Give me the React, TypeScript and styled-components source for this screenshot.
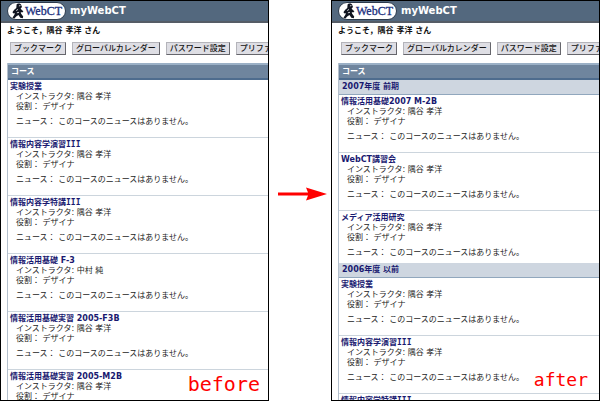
import React from "react";
import styled, { createGlobalStyle } from "styled-components";

const GlobalStyle = createGlobalStyle`
  *, *::before, *::after { box-sizing: border-box; }
  body {
    margin: 0;
    background: #fff;
    color: #1c1c1c;
    font-family: "DejaVu Sans", "Noto Sans CJK JP", sans-serif;
    font-size: 8px;
    line-height: 10px;
  }
`;

const Page = styled.main`
  display: grid;
  grid-template-columns: minmax(0, 1fr) 62px minmax(0, 1fr);
  height: 100vh;
  overflow: hidden;
`;

const Panel = styled.section`
  position: relative;
  overflow: hidden;
  border: 1px solid #000;
  background: #fff;
  white-space: nowrap;
`;

const Banner = styled.header`
  display: flex;
  align-items: center;
  gap: 4px;
  height: 22px;
  padding: 0 6px;
  background: #53687e;
  border-bottom: 2px solid #555c66;
`;

const Logo = styled.div`
  display: flex;
  align-items: center;
  gap: 1px;
  width: 59px;
  height: 18px;
  padding-left: 4px;
  border: 1px solid #2c3a4c;
  border-radius: 9px;
  background: #fff;
  color: #20307e;
  font-family: "Liberation Serif", serif;
  font-size: 12px;
  line-height: 16px;
  -webkit-text-stroke: 0.3px #20307e;
`;

const BannerTitle = styled.h1`
  margin: 0;
  color: #fff;
  font-size: 10px;
  line-height: 14px;
`;

const Welcome = styled.p`
  margin: 3px 0 0 6px;
  font-weight: 700;
  color: #111;
`;

const Toolbar = styled.nav`
  display: flex;
  gap: 6px;
  margin: 6px 0 8px 9px;
`;

const ToolButton = styled.button`
  flex: none;
  height: 13px;
  padding: 0 3px;
  border: 1px solid;
  border-color: #b4b4ba #66666c #66666c #b4b4ba;
  border-radius: 0;
  background: #dedee4;
  color: #151515;
  font: inherit;
  font-weight: 500;
  line-height: 10px;
`;

const CourseTable = styled.table`
  width: calc(100% - 6px);
  margin-left: 6px;
  border-collapse: separate;
  border-spacing: 0;
  border-left: 1px solid #b4c0cd;
`;

const HeadCell = styled.th`
  height: 17px;
  padding: 0 3px;
  border-top: 2px solid #9bb0c6;
  border-bottom: 2px solid #4e6c8e;
  background: #6f859e;
  color: #fff;
  text-align: left;
`;

const GroupCell = styled.th`
  height: 15px;
  padding: 0 3px;
  border-bottom: 1px solid #91a7bd;
  background: #ced6e0;
  color: #191970;
  text-align: left;
`;

const CourseCell = styled.td<{ $last: boolean }>`
  padding: 2px 2px ${(p) => (p.$last ? 5 : 10)}px;
  border-bottom: ${(p) => (p.$last ? "0" : "1px solid #ccd5dd")};
`;

const CourseLink = styled.a`
  display: block;
  color: #191970;
  font-weight: 700;
  text-decoration: none;
`;

const Numeral = styled.span`
  font-family: "DejaVu Sans Mono", monospace;
  line-height: 0;
`;

const Detail = styled.p`
  margin: 0 0 0 6px;
`;

const News = styled(Detail)`
  margin-top: 5px;
`;

const Caption = styled.strong<{ $small?: boolean }>`
  position: absolute;
  right: ${(p) => (p.$small ? 11 : 8)}px;
  bottom: ${(p) => (p.$small ? 10 : 6)}px;
  color: #f00;
  font-family: "DejaVu Sans Mono", monospace;
  font-size: ${(p) => (p.$small ? 18 : 20)}px;
  font-weight: 400;
  line-height: 20px;
`;

const Between = styled.div`
  padding: 186px 0 0 9px;
`;

type Course = { title: string; numeral?: string; teacher?: string };
type Group = { label?: string; courses: Course[] };

const before: Group[] = [
  {
    courses: [
      { title: "実験授業" },
      { title: "情報内容学演習", numeral: "III" },
      { title: "情報内容学特講", numeral: "III" },
      { title: "情報活用基礎 F-3", teacher: "中村 純" },
      { title: "情報活用基礎実習 2005-F3B" },
      { title: "情報活用基礎実習 2005-M2B" },
    ],
  },
];

const after: Group[] = [
  {
    label: "2007年度 前期",
    courses: [
      { title: "情報活用基礎2007 M-2B" },
      { title: "WebCT講習会" },
      { title: "メディア活用研究" },
    ],
  },
  {
    label: "2006年度 以前",
    courses: [
      { title: "実験授業" },
      { title: "情報内容学演習", numeral: "III" },
      { title: "情報内容学特講", numeral: "III" },
    ],
  },
];

const tools = ["ブックマーク", "グローバルカレンダー", "パスワード設定", "プリファレンス"];

function Figure() {
  return (
    <svg width="12" height="16" viewBox="0 0 12 16" aria-hidden="true">
      <path
        d="M4.6 1.6C5.6 0 9 .2 9.4 2.4L10 4 8.6 5.4 9.8 7 11.4 8.2 10.2 9.6 8.8 9 9 10.5 11.2 13.5 10.8 15.2 8.3 14.8 6.5 12 4.5 13.2 2.3 15.6 .4 14.8 2.4 11.7 2.8 9.9 1.6 10.6 .4 9.2 2.2 6.8 4.3 5Z"
        fill="#101420"
      />
      <path d="M6.9 2.9 8.5 2.6M4.2 7.6 6 6.4M4.9 9.8 7 9.3" stroke="#fff" strokeWidth=".8" />
    </svg>
  );
}

function Portal({ groups, children }: { groups: Group[]; children: React.ReactNode }) {
  return (
    <Panel>
      <Banner>
        <Logo>
          <Figure />
          WebCT
        </Logo>
        <BannerTitle>myWebCT</BannerTitle>
      </Banner>
      <Welcome>ようこそ，隅谷 孝洋 さん</Welcome>
      <Toolbar>
        {tools.map((tool) => (
          <ToolButton key={tool} type="button">
            {tool}
          </ToolButton>
        ))}
      </Toolbar>
      <CourseTable>
        <thead>
          <tr>
            <HeadCell scope="col">コース</HeadCell>
          </tr>
        </thead>
        {groups.map((group, g) => (
          <tbody key={g}>
            {group.label && (
              <tr>
                <GroupCell scope="rowgroup">{group.label}</GroupCell>
              </tr>
            )}
            {group.courses.map((course, i) => (
              <tr key={i}>
                <CourseCell $last={g < groups.length - 1 && i === group.courses.length - 1}>
                  <CourseLink href="#course">
                    {course.title}
                    {course.numeral && <Numeral>{course.numeral}</Numeral>}
                  </CourseLink>
                  <Detail>インストラクタ: {course.teacher ?? "隅谷 孝洋"}</Detail>
                  <Detail>役割： デザイナ</Detail>
                  <News>ニュース： このコースのニュースはありません。</News>
                </CourseCell>
              </tr>
            ))}
          </tbody>
        ))}
      </CourseTable>
      {children}
    </Panel>
  );
}

export default function App() {
  return (
    <>
      <GlobalStyle />
      <Page>
        <Portal groups={before}>
          <Caption>before</Caption>
        </Portal>
        <Between>
          <svg width="49" height="16" viewBox="0 0 49 16" role="img" aria-label="→">
            <path d="M0 6.5H30L28 1.5 49 8 28 14.5 30 9.5H0Z" fill="#f00" />
          </svg>
        </Between>
        <Portal groups={after}>
          <Caption $small>after</Caption>
        </Portal>
      </Page>
    </>
  );
}
